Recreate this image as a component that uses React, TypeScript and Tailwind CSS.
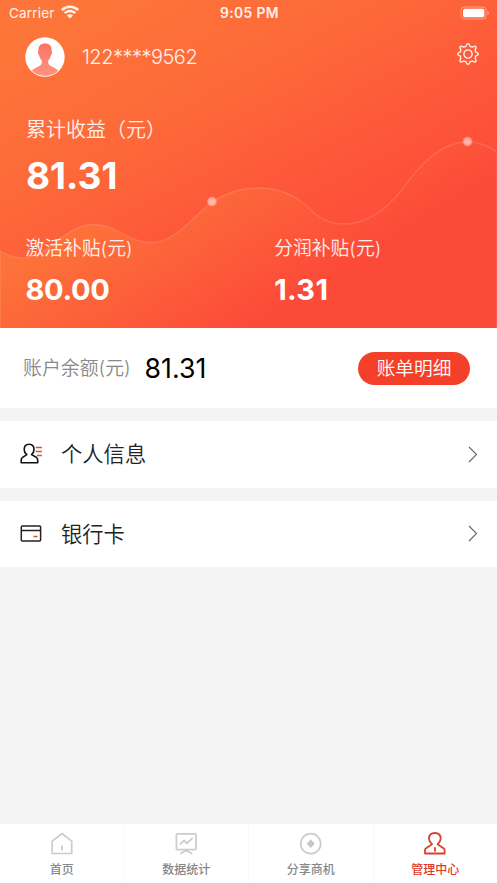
import type { ReactNode } from "react";

type Tab = {
  label: string;
  icon: ReactNode;
  active?: boolean;
};

const tabs: Tab[] = [
  { label: "首页", icon: <HomeIcon /> },
  { label: "数据统计", icon: <ChartIcon /> },
  { label: "分享商机", icon: <ShareIcon /> },
  { label: "管理中心", icon: <UserIcon />, active: true },
];

function HomeIcon() {
  return (
    <svg className="h-6 w-6" viewBox="0 0 24 24" fill="none" stroke="#cbcbd0" strokeWidth="1.7" strokeLinejoin="round">
      <path d="M2.2 9.2 12 1.5l9.7 7.7v12.3H2.2z" />
      <path d="M12 13.5v5" />
    </svg>
  );
}

function ChartIcon() {
  return (
    <svg className="h-6 w-6" viewBox="0 0 24 24" fill="none" stroke="#cbcbd0" strokeWidth="1.7" strokeLinecap="round" strokeLinejoin="round">
      <rect x="2.4" y="1.8" width="19.6" height="15.8" rx="1" />
      <path d="m6.6 11.8 3.4-3.4 2.8 3 5.4-5M6.9 21.5l5.3-3.4 5.5 3.4" />
    </svg>
  );
}

function ShareIcon() {
  return (
    <svg className="h-6 w-6" viewBox="0 0 24 24" fill="none">
      <circle cx="11.7" cy="11.7" r="10" stroke="#cbcbd0" strokeWidth="1.7" />
      <path d="m11.7 7.3 4 4.4-4 4.4-4-4.4z" fill="#c5c5cc" />
    </svg>
  );
}

function UserIcon() {
  return (
    <svg className="h-6 w-6" viewBox="0 0 24 24" fill="none" stroke="#d9402f" strokeWidth="1.8" strokeLinejoin="round">
      <path d="M9 12.2C7.1 10.4 5.9 8.8 5.9 6.6c0-3.500 2.100-5.600 5.900-5.600s5.900 2.100 5.900 5.600c0 2.200-1.200 3.800-3.100 5.600l6.200 4.200c.5.400.8.900.8 1.500v3.600H2v-3.600c0-.6.300-1.100.8-1.500z" />
      <path d="M12 15.2v4.6" />
    </svg>
  );
}

function GearIcon() {
  return (
    <svg className="h-[22px] w-[22px]" viewBox="-11 -11 22 22" fill="none" stroke="#fff" strokeOpacity=".9" strokeWidth="1.4" strokeLinejoin="round">
      <path d="M-2.2-7.600C-1.500-8.200-1.800-10.300 0-10.300S1.500-8.200 2.200-7.600C3.100-7.200 3.800-6.900 4.500-7c1.300-.4 2.200-1.400 3.200-.7 1 1 .1 1.900-.4 3.200-.1.700 0 1.400.3 2.300.6.700 2.700.4 2.700 2.200s-2.100 1.500-2.700 2.200c-.3.900-.4 1.600-.3 2.300.5 1.300 1.400 2.200.4 3.200-1 .7-1.900-.1-3.200-.5-.7-.1-1.400 0-2.300.4-.7.600-.4 2.700-2.200 2.700S-1.500 8.200-2.200 7.600C-3.100 7.200-3.800 7.100-4.500 7.200c-1.300.4-2.200 1.200-3.200.5-1-1-.1-1.900.4-3.200.1-.7 0-1.400-.3-2.300C-8.200 1.500-10.300 1.800-10.300 0s2.100-1.500 2.700-2.200c.3-.9.4-1.600.3-2.300-.5-1.300-1.400-2.200-.4-3.200 1-.7 1.900.3 3.200.7.700.1 1.400-.2 2.300-.6z" />
      <circle r="4.1" />
    </svg>
  );
}

function InfoIcon() {
  return (
    <svg className="h-6 w-6" viewBox="0 0 24 24" fill="none" strokeWidth="1.6" strokeLinejoin="round">
      <path
        stroke="#111"
        d="M6.800 12.600C5 11.200 4.200 9.500 4.200 7.700c0-3.200 1.800-5.400 4.900-5.400S14 4.500 14 7.700c0 1.800-.8 3.500-2.500 4.900l4.800 2.700c.9.600 1.400 1.500 1.400 2.600v2.800H1.200v-2.800c0-1.100.5-2 1.400-2.600z"
      />
      <path stroke="#dc5040" d="M15.700 5.500h6.200M15.700 9.500h6.200M16.900 13.500h5" />
    </svg>
  );
}

function CardIcon() {
  return (
    <svg className="h-6 w-6" viewBox="0 0 24 24" fill="none" strokeWidth="1.5">
      <rect x="1.3" y="4" width="19.3" height="15" rx="1" stroke="#222" />
      <path d="M1.3 8.5h19.3" stroke="#222" />
      <path d="M13.5 14.5h4" stroke="#e04535" />
    </svg>
  );
}

function StatusBar() {
  return (
    <div className="grid h-[26px] grid-cols-3 items-center pl-[9px] pr-[7px] text-white/90">
      <div className="flex items-center gap-[6px]">
        <span className="text-[13.5px] leading-[26px] tracking-[0.2px]">Carrier</span>
        <svg className="-mt-[2px] h-[14px] w-[18px]" viewBox="0 0 18 14" fill="none" stroke="currentColor" strokeWidth="2.5">
          <path d="M.8 5C5.300.6 12.700.6 17.200 5M3.700 8.200c2.900-2.900 7.700-2.900 10.600 0" />
          <path d="M9 13.500 5.900 10.400c1.700-1.700 4.500-1.700 6.200 0z" fill="currentColor" stroke="none" />
        </svg>
      </div>
      <div className="text-center text-[13.8px] font-semibold leading-[26px] tracking-[0.4px]">9:05 PM</div>
      <svg className="-mt-[1px] h-[14px] w-[30px] justify-self-end" viewBox="0 0 30 14" fill="none">
        <rect x="1" y="1" width="25" height="12" rx="3.5" stroke="#fff" strokeOpacity=".4" />
        <rect x="3" y="2.8" width="21.3" height="8.5" rx="1.8" fill="#fff" />
        <path d="M27.5 5v4c1.800-.8 1.800-3.200 0-4z" fill="#fff" fillOpacity=".5" />
      </svg>
    </div>
  );
}

function Wave() {
  const line =
    "M0 251C8 256 15 258 23 258C50 258 63 224.5 94 224.5C118 224.5 127 242.5 151 242.5C175 242.5 190 220 212 201.5C226 193 240 188 258 188C288 188 303 202 314 213C323 221 332 224 344 224C365 224 383 213 401 191C421 163 442 142 467 142C479 142 489 146 497 152";

  return (
    <svg className="absolute inset-0 h-[328px] w-full" viewBox="0 0 497 328" preserveAspectRatio="none">
      <defs>
        <linearGradient id="wave" gradientUnits="userSpaceOnUse" x1="125" y1="200" x2="217" y2="348">
          <stop offset="0" stopColor="#fd7239" />
          <stop offset="1" stopColor="#fc4a39" />
        </linearGradient>
        <radialGradient id="dot">
          <stop offset="0" stopColor="#fff" stopOpacity=".55" />
          <stop offset=".6" stopColor="#fff" stopOpacity=".5" />
          <stop offset="1" stopColor="#fff" stopOpacity="0" />
        </radialGradient>
      </defs>
      <path d={`${line}V330H0Z`} fill="url(#wave)" stroke="#fff" strokeOpacity=".13" strokeWidth="1.4" />
      <circle cx="212" cy="201.5" r="5.5" fill="url(#dot)" />
      <circle cx="467.5" cy="141.5" r="5.5" fill="url(#dot)" />
    </svg>
  );
}

function Avatar() {
  return (
    <svg className="h-10 w-10" viewBox="0 0 40 40">
      <defs>
        <clipPath id="avatar">
          <circle cx="20" cy="20" r="19" />
        </clipPath>
        <linearGradient id="person" x1="0" y1="0" x2="0" y2="1">
          <stop offset="0" stopColor="#fb7463" />
          <stop offset="1" stopColor="#ff9482" />
        </linearGradient>
      </defs>
      <circle cx="20" cy="20" r="19.7" fill="#fff" />
      <path
        clipPath="url(#avatar)"
        fill="url(#person)"
        d="M20 6.500c-5 0-7 3-6.600 7.500-.8.500-.5 3.800.8 4.500.5 2.500 1.500 3.500 2.500 5 .3 2.500 0 4-1.500 5C11 31 8.500 31.500 6.500 34v6h27v-6c-2-2.500-4.500-3-8.700-5.500-1.500-1-1.800-2.500-1.500-5 1-1.500 2-2.500 2.500-5 1.300-.7 1.600-4 .8-4.500C27 9.500 25 6.500 20 6.500z"
      />
    </svg>
  );
}

function MenuRow({ icon, label }: { icon: ReactNode; label: string }) {
  return (
    <button className="mt-[13px] flex h-[66.5px] w-full items-center bg-white pl-5 pr-[19px] text-left">
      {icon}
      <span className="ml-[17px] flex-1 text-[21.3px] font-[350] leading-8 text-[#222]">{label}</span>
      <svg className="h-[17px] w-[10px]" viewBox="0 0 10 17" fill="none" stroke="#666" strokeWidth="1.1">
        <path d="m1 1 7.500 7.500L1 16" />
      </svg>
    </button>
  );
}

export default function App() {
  return (
    <div lang="zh-CN" className="flex h-[883px] w-full flex-col overflow-hidden bg-[#f4f4f4] font-['Inter','Noto_Sans_CJK_SC',sans-serif]">
      <header className="relative h-[328px] shrink-0 bg-[linear-gradient(152deg,#fd7539_10%,#fd6839_36%,#fd5839_56%,#fd4d39_72%)] text-white">
        <Wave />
        <div className="relative">
          <StatusBar />
          <div className="flex h-[62px] items-center pl-[25px] pr-[18px]">
            <Avatar />
            <span className="ml-[17px] flex-1 text-[20px] font-[350] tracking-[-0.5px] text-white/90">122****9562</span>
            <div className="-mt-[7px]">
              <GearIcon />
            </div>
          </div>
          <div className="h-[147px] px-[26px] pt-[25px]">
            <div className="font-['Noto_Sans_CJK_SC',sans-serif] text-[20px] font-[350] leading-8 text-white/90">累计收益（元）</div>
            <div className="mt-[6px] text-[37px] font-bold leading-[50px]">81.31</div>
          </div>
          <div className="grid grid-cols-2 pl-[25.5px]">
            <div>
              <div className="pt-px text-[18.8px] font-[350] leading-[26px] text-white/90">激活补贴(元)</div>
              <div className="mt-[8px] text-[29px] font-bold leading-[40px] tracking-[-0.3px]">80.00</div>
            </div>
            <div className="pl-[13px]">
              <div className="pt-px text-[18.8px] font-[350] leading-[26px] text-white/90">分润补贴(元)</div>
              <div className="mt-[8px] text-[29px] font-bold leading-[40px] tracking-[0.3px]">1.31</div>
            </div>
          </div>
        </div>
      </header>

      <section className="flex h-20 shrink-0 items-center bg-white pl-[23px] pr-[27px]">
        <span className="pt-[3px] text-[18.9px] font-[350] text-[#888]">账户余额(元)</span>
        <span className="ml-[14px] flex-1 pt-px text-[26.7px] text-black">81.31</span>
        <button className="h-[33px] w-[112px] rounded-full bg-[#f43f29] text-[18.7px] font-[350] leading-[33px] text-white">
          账单明细
        </button>
      </section>

      <MenuRow icon={<InfoIcon />} label="个人信息" />
      <MenuRow icon={<CardIcon />} label="银行卡" />

      <nav className="mt-auto flex h-[59px] shrink-0 bg-white">
        {tabs.map((tab) => (
          <button
            key={tab.label}
            className="flex flex-1 flex-col items-center border-r border-[#f8f8f8] pt-[8px] last:border-r-0"
          >
            {tab.icon}
            <span
              className={
                tab.active
                  ? "mt-[5px] text-[12px] font-medium leading-[18px] text-[#e03a28]"
                  : "mt-[5px] text-[12px] font-medium leading-[18px] text-[#888]"
              }
            >
              {tab.label}
            </span>
          </button>
        ))}
      </nav>
    </div>
  );
}
